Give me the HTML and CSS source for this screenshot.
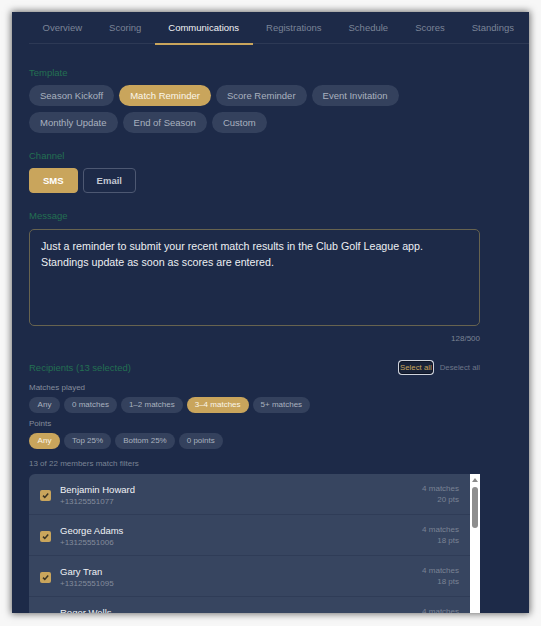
FILE: index.html
```html
<!DOCTYPE html>
<html lang="en">
<head>
<meta charset="utf-8">
<title>Communications</title>
<link rel="stylesheet" href="styles.css">
</head>
<body>
<div class="panel">
  <nav class="tabs">
    <span class="tab">Overview</span>
    <span class="tab">Scoring</span>
    <span class="tab active">Communications</span>
    <span class="tab">Registrations</span>
    <span class="tab">Schedule</span>
    <span class="tab">Scores</span>
    <span class="tab">Standings</span>
  </nav>
  <div class="content">
    <section class="sec sec-template">
      <div class="label">Template</div>
      <div class="chips">
        <span class="chip">Season Kickoff</span>
        <span class="chip on">Match Reminder</span>
        <span class="chip">Score Reminder</span>
        <span class="chip">Event Invitation</span>
        <span class="chip">Monthly Update</span>
        <span class="chip">End of Season</span>
        <span class="chip">Custom</span>
      </div>
    </section>
    <section class="sec sec-channel">
      <div class="label">Channel</div>
      <div class="channels">
        <button class="ch on">SMS</button>
        <button class="ch">Email</button>
      </div>
    </section>
    <section class="sec sec-message">
      <div class="label">Message</div>
      <textarea class="msg" readonly>Just a reminder to submit your recent match results in the Club Golf League app. Standings update as soon as scores are entered.</textarea>
      <div class="counter">128/500</div>
    </section>
    <section class="sec sec-recipients">
      <div class="rec-head">
        <div class="label">Recipients (13 selected)</div>
        <div class="rec-actions">
          <button class="sel">Select all</button>
          <button class="desel">Deselect all</button>
        </div>
      </div>
      <div class="sublabel matches-label">Matches played</div>
      <div class="chips small">
        <span class="chip">Any</span>
        <span class="chip">0 matches</span>
        <span class="chip">1–2 matches</span>
        <span class="chip on">3–4 matches</span>
        <span class="chip">5+ matches</span>
      </div>
      <div class="sublabel points-label">Points</div>
      <div class="chips small">
        <span class="chip on">Any</span>
        <span class="chip">Top 25%</span>
        <span class="chip">Bottom 25%</span>
        <span class="chip">0 points</span>
      </div>
      <div class="sublabel match-count">13 of 22 members match filters</div>
      <div class="list-wrap">
        <div class="list">
          <div class="row">
            <span class="cb"><svg viewBox="0 0 11 11" width="11" height="11"><path d="M3 5.6 L4.8 7.4 L8.2 3.4" fill="none" stroke="#3b3424" stroke-width="1.5"/></svg></span>
            <div class="who"><div class="name">Benjamin Howard</div><div class="phone">+13125551077</div></div>
            <div class="stats"><div>4 matches</div><div>20 pts</div></div>
          </div>
          <div class="row">
            <span class="cb"><svg viewBox="0 0 11 11" width="11" height="11"><path d="M3 5.6 L4.8 7.4 L8.2 3.4" fill="none" stroke="#3b3424" stroke-width="1.5"/></svg></span>
            <div class="who"><div class="name">George Adams</div><div class="phone">+13125551006</div></div>
            <div class="stats"><div>4 matches</div><div>18 pts</div></div>
          </div>
          <div class="row">
            <span class="cb"><svg viewBox="0 0 11 11" width="11" height="11"><path d="M3 5.6 L4.8 7.4 L8.2 3.4" fill="none" stroke="#3b3424" stroke-width="1.5"/></svg></span>
            <div class="who"><div class="name">Gary Tran</div><div class="phone">+13125551095</div></div>
            <div class="stats"><div>4 matches</div><div>18 pts</div></div>
          </div>
          <div class="row">
            <span class="cb"><svg viewBox="0 0 11 11" width="11" height="11"><path d="M3 5.6 L4.8 7.4 L8.2 3.4" fill="none" stroke="#3b3424" stroke-width="1.5"/></svg></span>
            <div class="who"><div class="name">Roger Wells</div><div class="phone">+13125551032</div></div>
            <div class="stats"><div>4 matches</div><div>16 pts</div></div>
          </div>
        </div>
        <div class="scrollbar">
          <span class="arrow"></span>
          <span class="thumb"></span>
        </div>
      </div>
    </section>
  </div>
</div>
</body>
</html>
```

FILE: styles.css
```css
* { box-sizing: border-box; }
html, body { margin: 0; padding: 0; }
body {
  background: #f7f7f7;
  padding: 12px;
  font-family: "Liberation Sans", Arial, sans-serif;
}
.panel {
  width: 517px;
  height: 601px;
  overflow: hidden;
  background: #1d2a48;
  box-shadow: 0 0 7px 1px rgba(0, 0, 0, 0.55);
}
.tabs {
  display: flex;
  margin-left: 17px;
  height: 32px;
  border-bottom: 1px solid #2d3955;
  white-space: nowrap;
}
.tab {
  position: relative;
  padding: 0 13.5px;
  height: 31px;
  line-height: 32px;
  font-size: 9.5px;
  color: #7b8497;
}
.tab.active { color: #f2f3f5; }
.tab.active::after {
  content: "";
  position: absolute;
  left: 0;
  right: 0;
  bottom: -2px;
  height: 2px;
  background: #c9a55c;
}
.content {
  width: 468px;
  padding: 22px 0 0 17px;
}
.label {
  font-size: 9.5px;
  line-height: 13px;
  height: 13px;
  color: #237052;
  margin-bottom: 6px;
}
.chips {
  display: flex;
  flex-wrap: wrap;
  gap: 6px 5px;
}
.chip {
  display: inline-block;
  height: 21px;
  line-height: 21px;
  padding: 0 11px;
  border-radius: 11px;
  background: #34415d;
  color: #a9b1bf;
  font-size: 9.5px;
  white-space: nowrap;
  text-align: center;
}
.chip.on { background: #c9a55c; color: #fbf6ea; }
.sec-channel { margin-top: 16px; }
.channels { display: flex; gap: 5px; }
.ch {
  height: 25px;
  padding: 0 13px;
  border: 1px solid #4d5872;
  border-radius: 4px;
  background: transparent;
  color: #c3c8d2;
  font-family: "Liberation Sans", Arial, sans-serif;
  font-size: 9.5px;
  font-weight: bold;
}
.ch.on { background: #c9a55c; border-color: #c9a55c; color: #fff; }
.sec-message { margin-top: 16px; }
.sec-message .label { margin-bottom: 7px; }
.msg {
  display: block;
  width: 451px;
  height: 97px;
  margin: 0;
  padding: 7.5px 11px;
  border: 1px solid #67634f;
  border-radius: 5px;
  background: transparent;
  color: #eceef2;
  font-family: "Liberation Sans", Arial, sans-serif;
  font-size: 10.7px;
  line-height: 16px;
  resize: none;
  outline: none;
  overflow: hidden;
}
.counter {
  width: 451px;
  text-align: right;
  margin-top: 7px;
  font-size: 8px;
  line-height: 11px;
  color: #7a8394;
}
.sec-recipients { margin-top: 16px; width: 451px; }
.rec-head {
  display: flex;
  justify-content: space-between;
  align-items: center;
  height: 14px;
}
.rec-head .label { margin: 0; }
.rec-actions { display: flex; align-items: center; gap: 7px; }
.sel, .desel {
  font-family: "Liberation Sans", Arial, sans-serif;
  font-size: 7.8px;
  line-height: 11px;
  background: transparent;
  padding: 0;
  border: 0;
}
.sel {
  color: #c9a55c;
  height: 13px;
  border: 1px solid #0e1424;
  border-radius: 3px;
  box-shadow: 0 0 0 1px #cfd3dc;
  background: #182238;
}
.desel { color: #6d7688; }
.sublabel {
  font-size: 8px;
  line-height: 11px;
  color: #858d9c;
}
.matches-label { margin-top: 8px; margin-bottom: 4px; }
.points-label { margin-top: 5px; margin-bottom: 4px; }
.match-count { margin-top: 9px; margin-bottom: 5px; color: #7a8394; }
.chips.small { gap: 4px; }
.chips.small .chip {
  height: 16px;
  line-height: 16px;
  padding: 0 8px;
  border-radius: 8px;
  font-size: 8px;
  min-width: 31px;
}
.list-wrap { display: flex; }
.list {
  flex: 1;
  background: #374560;
  border-top-left-radius: 6px;
}
.row {
  display: flex;
  align-items: center;
  height: 41px;
  padding: 2px 11px 0;
  border-bottom: 1px solid #2f3c57;
}
.cb {
  width: 11px;
  height: 11px;
  border-radius: 2px;
  background: #c9a55c;
  flex: none;
  display: flex;
}
.who { margin-left: 9px; }
.name { font-size: 9.5px; line-height: 13px; color: #f0f2f5; }
.phone { font-size: 8px; line-height: 11px; color: #848c9c; }
.stats {
  margin-left: auto;
  text-align: right;
  font-size: 8px;
  line-height: 11px;
  color: #7a8394;
  margin-top: -2px;
}
.scrollbar {
  position: relative;
  width: 10px;
  background: #fff;
  flex: none;
}
.arrow {
  position: absolute;
  top: 4px;
  left: 2px;
  width: 0;
  height: 0;
  border-left: 3px solid transparent;
  border-right: 3px solid transparent;
  border-bottom: 4px solid #8a8a8a;
}
.thumb {
  position: absolute;
  top: 13px;
  left: 2px;
  width: 6px;
  height: 41px;
  border-radius: 3px;
  background: #8e8e8e;
}
```
